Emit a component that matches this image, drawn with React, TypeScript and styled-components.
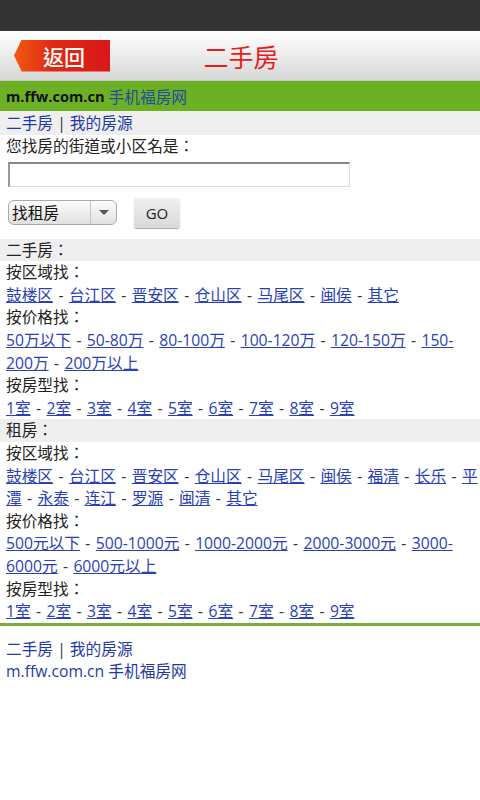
import React from 'react';
import styled, { createGlobalStyle } from 'styled-components';

const GlobalStyle = createGlobalStyle`
  body {
    margin: 0;
    background: #fff;
    font-family: "Open Sans", "Noto Sans CJK TC", sans-serif;
    font-size: 15.7px;
    color: #222;
  }
`;

const Page = styled.div`
  width: 480px;
  min-height: 800px;
  background: #fff;
`;

const StatusBar = styled.div`
  height: 31px;
  background: #333;
`;

const TitleBar = styled.div`
  height: 49px;
  display: grid;
  grid-template-columns: 130px 1fr 130px;
  align-items: center;
  background: linear-gradient(#ffffff, #f0f0f0 40%, #d6d6d6);
  border-bottom: 1px solid #c8c8c8;
`;

const BackButton = styled.div`
  margin-left: 14px;
  width: 96px;
  height: 32px;
  display: flex;
  align-items: center;
  justify-content: center;
  padding-left: 4px;
  box-sizing: border-box;
  color: #fff;
  font-size: 21px;
  font-weight: 500;
  background: linear-gradient(90deg, #ee5a10, #e02a14 40%, #d8181a);
  clip-path: polygon(8% 0, 100% 0, 100% 100%, 8% 100%, 0 50%);
`;

const Title = styled.div`
  text-align: center;
  color: #e81c1c;
  font-size: 25px;
  padding-left: 2px;
`;

const SiteBar = styled.div`
  height: 30px;
  display: flex;
  align-items: center;
  padding-left: 6px;
  background: #6cb023;
`;

const Domain = styled.span`
  font-weight: bold;
  font-size: 14.6px;
  color: #111;
  margin-right: 4px;
`;

const SiteName = styled.span`
  color: #1f4fa0;
`;

const Row = styled.div<{ $shade?: boolean }>`
  padding: 0 0 0 6px;
  line-height: 22.6px;
  background: ${(p) => (p.$shade ? '#efefef' : 'transparent')};
`;

const NavRow = styled(Row)`
  line-height: 24px;
`;

const Link = styled.a<{ $plain?: boolean }>`
  color: ${(p) => (p.$plain ? '#1f3aa8' : '#2a3fb8')};
  text-decoration: ${(p) => (p.$plain ? 'none' : 'underline')};
`;

const Sep = styled.span`
  color: #333;
  word-spacing: 1.3px;
`;

const SearchInput = styled.input`
  display: block;
  margin: 4px 0 0 8px;
  width: 342px;
  height: 25px;
  box-sizing: border-box;
  border: 1px solid #ddd;
  border-top: 2px solid #888;
  border-left: 2px solid #999;
  background: #fff;
`;

const Controls = styled.div`
  display: flex;
  align-items: center;
  gap: 17px;
  padding: 11px 0 11px 8px;
`;

const Select = styled.div`
  width: 109px;
  height: 25px;
  box-sizing: border-box;
  border: 1px solid #aaa;
  border-radius: 6px;
  display: flex;
  align-items: stretch;
  background: linear-gradient(#fdfdfd, #e0e0e0);
  overflow: hidden;
`;

const SelectLabel = styled.div`
  flex: 1;
  display: flex;
  align-items: center;
  padding-left: 3px;
  color: #111;
`;

const SelectArrow = styled.div`
  width: 25px;
  border-left: 1px solid #c4c4c4;
  display: flex;
  align-items: center;
  justify-content: center;
  &::after {
    content: '';
    border-left: 5px solid transparent;
    border-right: 5px solid transparent;
    border-top: 5px solid #555;
  }
`;

const GoButton = styled.div`
  width: 46px;
  height: 30px;
  display: flex;
  align-items: center;
  justify-content: center;
  border-radius: 3px;
  background: linear-gradient(#f0f0f0, #d9d9d9);
  box-shadow: 0 1px 1px #aaa;
  color: #222;
  font-size: 15px;
`;

const Divider = styled.div`
  margin-top: 0;
  height: 3px;
  background: #7ab03a;
`;

const Footer = styled.div`
  padding-top: 12px;
`;

type LinkLineProps = { items: string[] };

const LinkLine: React.FC<LinkLineProps> = ({ items }) => (
  <Row>
    {items.map((t, i) => (
      <React.Fragment key={t + i}>
        {i > 0 && <Sep> - </Sep>}
        <Link href="#">{t}</Link>
      </React.Fragment>
    ))}
  </Row>
);

const rooms = ['1室', '2室', '3室', '4室', '5室', '6室', '7室', '8室', '9室'];

const App: React.FC = () => (
  <Page>
    <GlobalStyle />
    <StatusBar />
    <TitleBar>
      <BackButton>返回</BackButton>
      <Title>二手房</Title>
      <div />
    </TitleBar>
    <SiteBar>
      <Domain>m.ffw.com.cn</Domain>
      <SiteName>手机福房网</SiteName>
    </SiteBar>
    <NavRow $shade>
      <Link href="#" $plain>二手房</Link> <Sep>|</Sep> <Link href="#" $plain>我的房源</Link>
    </NavRow>
    <Row>您找房的街道或小区名是：</Row>
    <SearchInput type="text" />
    <Controls>
      <Select>
        <SelectLabel>找租房</SelectLabel>
        <SelectArrow />
      </Select>
      <GoButton>GO</GoButton>
    </Controls>

    <Row $shade>二手房：</Row>
    <Row>按区域找：</Row>
    <LinkLine items={['鼓楼区', '台江区', '晋安区', '仓山区', '马尾区', '闽侯', '其它']} />
    <Row>按价格找：</Row>
    <LinkLine items={['50万以下', '50-80万', '80-100万', '100-120万', '120-150万', '150-200万', '200万以上']} />
    <Row>按房型找：</Row>
    <LinkLine items={rooms} />

    <Row $shade>租房：</Row>
    <Row>按区域找：</Row>
    <LinkLine
      items={['鼓楼区', '台江区', '晋安区', '仓山区', '马尾区', '闽侯', '福清', '长乐', '平潭', '永泰', '连江', '罗源', '闽清', '其它']}
    />
    <Row>按价格找：</Row>
    <LinkLine items={['500元以下', '500-1000元', '1000-2000元', '2000-3000元', '3000-6000元', '6000元以上']} />
    <Row>按房型找：</Row>
    <LinkLine items={rooms} />

    <Divider />
    <Footer>
      <Row>
        <Link href="#" $plain>二手房</Link> <Sep>|</Sep> <Link href="#" $plain>我的房源</Link>
      </Row>
      <Row>
        <Link href="#" $plain>m.ffw.com.cn 手机福房网</Link>
      </Row>
    </Footer>
  </Page>
);

export default App;
